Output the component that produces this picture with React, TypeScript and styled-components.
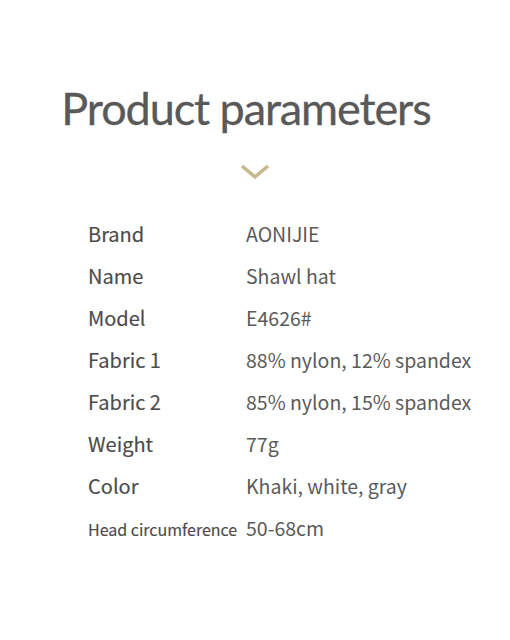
import React from "react";
import styled, { createGlobalStyle } from "styled-components";

const rows: { label: string; value: string; small?: boolean }[] = [
    { label: "Brand", value: "AONIJIE" },
    { label: "Name", value: "Shawl hat" },
    { label: "Model", value: "E4626#" },
    { label: "Fabric 1", value: "88% nylon, 12% spandex" },
    { label: "Fabric 2", value: "85% nylon, 15% spandex" },
    { label: "Weight", value: "77g" },
    { label: "Color", value: "Khaki, white, gray" },
    { label: "Head circumference", value: "50-68cm", small: true },
];

export default function App() {
    return (
        <>
            <GlobalStyle />
            <Page>
                <Title>Product parameters</Title>
                <Chevron width="30" height="18" viewBox="0 0 30 18">
                    <path d="M2 3 L15 14 L28 3" fill="none" stroke="#c9b88d" strokeWidth="3.6" />
                </Chevron>
                <Table>
                    {rows.map((r) => (
                        <Row key={r.label}>
                            <Label small={r.small}>{r.label}</Label>
                            <Value>{r.value}</Value>
                        </Row>
                    ))}
                </Table>
            </Page>
        </>
    );
}

const GlobalStyle = createGlobalStyle`
    body {
        margin: 0;
        background: #ffffff;
    }
`;

const Page = styled.div`
    width: 510px;
    height: 640px;
    display: flex;
    flex-direction: column;
    align-items: center;
    padding-top: 80px;
    box-sizing: border-box;
`;

const Title = styled.h1`
    margin: 0 18px 0 0;
    font-family: Lato, "Noto Sans", sans-serif;
    font-weight: 400;
    font-size: 45px;
    line-height: 56px;
    letter-spacing: -1.1px;
    color: #595959;
    -webkit-text-stroke: 0.3px #595959;
`;

const Chevron = styled.svg`
    display: block;
    margin-top: 27px;
`;

const Table = styled.div`
    align-self: stretch;
    padding-left: 88px;
    margin-top: 38px;
    display: flex;
    flex-direction: column;
`;

const Row = styled.div`
    display: flex;
    align-items: baseline;
    height: 42px;
`;

const Label = styled.div<{ small?: boolean }>`
    width: 158px;
    flex-shrink: 0;
    font-family: "Noto Sans CJK SC", "Noto Sans", sans-serif;
    font-weight: 400;
    font-size: ${(p) => (p.small ? "16px" : "20px")};
    color: #4b4b4b;
    -webkit-text-stroke: 0.15px #4b4b4b;
    white-space: nowrap;
`;

const Value = styled.div`
    font-family: "Noto Sans CJK SC", "Noto Sans", sans-serif;
    font-weight: 400;
    font-size: 19.5px;
    color: #5a5a5a;
    white-space: nowrap;
`;
